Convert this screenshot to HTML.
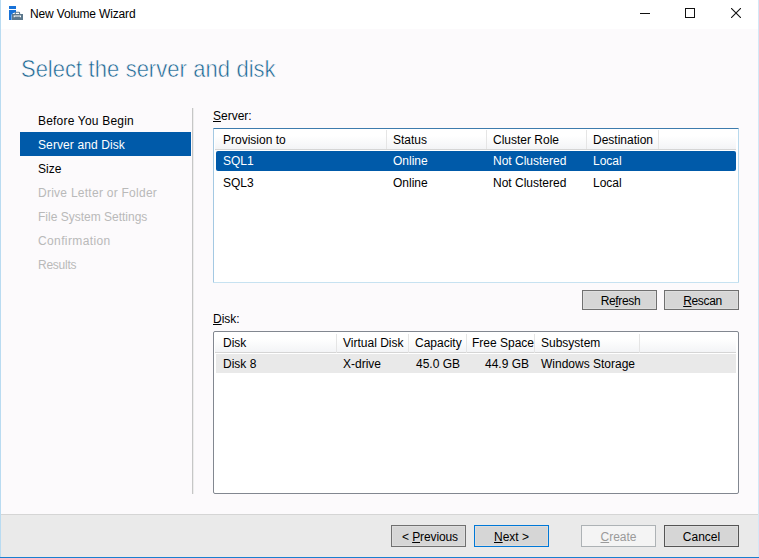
<!DOCTYPE html>
<html><head><meta charset="utf-8">
<style>
*{box-sizing:border-box;margin:0;padding:0}
html,body{width:759px;height:558px;overflow:hidden;background:#fcfafc}
body{position:relative;font-family:"Liberation Sans",sans-serif;font-size:12px;color:#000}
.abs{position:absolute}
.t{position:absolute;white-space:nowrap;line-height:14px}
#bl{left:0;top:0;width:1px;height:558px;background:#b9dbf1}
#br{left:758px;top:0;width:1px;height:558px;background:#d3e7f6}
#bb{left:0;top:557px;width:759px;height:1px;background:#1a7fd0}
#titlebar{left:1px;top:0;width:757px;height:29px;background:#fff}
#heading{left:21px;top:55px;font-size:24px;line-height:28px;color:#186592;transform:scaleX(0.915);transform-origin:0 0;-webkit-text-stroke:0.55px #fcfafc;word-spacing:0.5px}
.nav{position:absolute;left:20px;width:171px;height:24px}
.nav span{position:absolute;left:18px;top:6px;white-space:nowrap;line-height:14px}
.dis{color:#b9b9b9}
#navsep{left:192px;top:108px;width:2px;height:386px;border-left:1px solid #c6c6c6;background:#ededed}
.list{position:absolute;background:#fff}
.hdr{position:absolute;left:1px;top:1px;height:20px;background:linear-gradient(#fff 30%,#f3f4f6);border-bottom:1px solid #d5d5d5}
.col{position:absolute;top:1px;width:1px;height:19px;background:#e5e5e5}
.btn{position:absolute;height:22px;width:75px;background:#d6d6d6;border:1px solid #707070;box-shadow:inset 0 0 0 1px #dddddd;text-align:center;line-height:22px}
u{text-decoration:underline;text-underline-offset:1px;text-decoration-thickness:1px}
#footer{left:1px;top:514px;width:757px;height:43px;background:#eaeaea;border-top:1px solid #d5d5d5}
</style></head><body>
<div id="titlebar" class="abs"></div>
<svg class="abs" style="left:9px;top:6px" width="15" height="15" viewBox="0 0 15 15">
  <rect x="0" y="0" width="7" height="3" fill="#1872d8"/>
  <path d="M0 4H7V6.2Q4 6.6 2.6 8.6V14H0Z" fill="#1872d8"/>
  <path d="M6.3 8.2V6.9Q6.3 6.3 6.9 6.3H10Q10.6 6.3 10.6 6.9V8.2" stroke="#5d788c" stroke-width="1.1" fill="none"/>
  <rect x="3" y="8" width="11" height="6" fill="#5d788c"/>
  <path d="M4.7 9.4H12V11.2H11V10.4H5.7V11.2H4.7Z" fill="#fff"/>
</svg>
<div class="t" style="left:30px;top:7px;letter-spacing:-0.15px">New Volume Wizard</div>
<div class="abs" style="left:640px;top:13px;width:10px;height:1px;background:#111"></div>
<div class="abs" style="left:685px;top:8px;width:10px;height:10px;border:1px solid #111"></div>
<svg class="abs" style="left:731px;top:8px" width="10" height="10" viewBox="0 0 10 10"><path d="M0 0L10 10M10 0L0 10" stroke="#111" stroke-width="1.1"/></svg>

<div id="heading" class="t">Select the server and disk</div>

<div class="nav" style="top:108px"><span style="letter-spacing:0.2px">Before You Begin</span></div>
<div class="nav" style="top:132px;background:#005aa9;color:#fff"><span style="letter-spacing:0.1px">Server and Disk</span></div>
<div class="nav" style="top:156px"><span>Size</span></div>
<div class="nav dis" style="top:180px"><span style="letter-spacing:0.26px">Drive Letter or Folder</span></div>
<div class="nav dis" style="top:204px"><span>File System Settings</span></div>
<div class="nav dis" style="top:228px"><span style="letter-spacing:0.38px">Confirmation</span></div>
<div class="nav dis" style="top:252px"><span style="letter-spacing:-0.25px">Results</span></div>
<div id="navsep" class="abs"></div>

<div class="t" style="left:213px;top:109px"><u>S</u>erver:</div>
<div class="list" style="left:213px;top:128px;width:526px;height:155px;border:1px solid;border-color:#3d7bad #b7d9ed #c7e2f1 #a4c9e3;border-radius:1px">
  <div class="hdr" style="width:521px"></div>
</div>
<div class="t" style="left:223px;top:133px">Provision to</div>
<div class="t" style="left:393px;top:133px">Status</div>
<div class="t" style="left:493px;top:133px">Cluster Role</div>
<div class="t" style="left:593px;top:133px">Destination</div>
<div class="abs" style="left:386px;top:130px;width:1px;height:19px;background:#e5e5e5"></div>
<div class="abs" style="left:486px;top:130px;width:1px;height:19px;background:#e5e5e5"></div>
<div class="abs" style="left:586px;top:130px;width:1px;height:19px;background:#e5e5e5"></div>
<div class="abs" style="left:658px;top:130px;width:1px;height:19px;background:#e5e5e5"></div>
<div class="abs" style="left:216px;top:151px;width:520px;height:20px;background:#005aa9;border-radius:2px"></div>
<div class="t" style="left:223px;top:154px;color:#fff">SQL1</div>
<div class="t" style="left:393px;top:154px;color:#fff">Online</div>
<div class="t" style="left:493px;top:154px;color:#fff">Not Clustered</div>
<div class="t" style="left:593px;top:154px;color:#fff">Local</div>
<div class="t" style="left:223px;top:176px">SQL3</div>
<div class="t" style="left:393px;top:176px">Online</div>
<div class="t" style="left:493px;top:176px">Not Clustered</div>
<div class="t" style="left:593px;top:176px">Local</div>

<div class="btn" style="left:582px;top:290px;height:20px;line-height:20px;letter-spacing:-0.35px;padding-left:2px">Re<u>f</u>resh</div>
<div class="btn" style="left:664px;top:290px;height:20px;line-height:20px;letter-spacing:-0.35px;padding-left:2px"><u>R</u>escan</div>

<div class="t" style="left:213px;top:312px"><u>D</u>isk:</div>
<div class="list" style="left:213px;top:331px;width:526px;height:163px;border:1px solid #828790;border-radius:2px">
  <div class="hdr" style="width:521px"></div>
</div>
<div class="t" style="left:223px;top:336px">Disk</div>
<div class="t" style="left:343px;top:336px">Virtual Disk</div>
<div class="t" style="left:415px;top:336px">Capacity</div>
<div class="t" style="left:472px;top:336px">Free Space</div>
<div class="t" style="left:541px;top:336px">Subsystem</div>
<div class="abs" style="left:336px;top:334px;width:1px;height:19px;background:#e5e5e5"></div>
<div class="abs" style="left:408px;top:334px;width:1px;height:19px;background:#e5e5e5"></div>
<div class="abs" style="left:466px;top:334px;width:1px;height:19px;background:#e5e5e5"></div>
<div class="abs" style="left:534px;top:334px;width:1px;height:19px;background:#e5e5e5"></div>
<div class="abs" style="left:639px;top:334px;width:1px;height:19px;background:#e5e5e5"></div>
<div class="abs" style="left:216px;top:354px;width:520px;height:19px;background:#e9e9e9"></div>
<div class="t" style="left:223px;top:357px">Disk 8</div>
<div class="t" style="left:343px;top:357px">X-drive</div>
<div class="t" style="right:299px;top:357px">45.0 GB</div>
<div class="t" style="right:230px;top:357px">44.9 GB</div>
<div class="t" style="left:541px;top:357px">Windows Storage</div>

<div id="footer" class="abs"></div>
<div class="btn" style="left:391px;top:525px;padding-left:3px;letter-spacing:-0.1px">&lt; <u>P</u>revious</div>
<div class="btn" style="left:474px;top:525px;border-color:#0078d7"><u>N</u>ext &gt;</div>
<div class="btn" style="left:581px;top:525px;background:#f4f4f4;box-shadow:none;border-color:#adb2b5;color:#9a9a9a"><u>C</u>reate</div>
<div class="btn" style="left:664px;top:525px;border-color:#555">Cancel</div>

<div id="bl" class="abs"></div>
<div id="br" class="abs"></div>
<div id="bb" class="abs"></div>
</body></html>
